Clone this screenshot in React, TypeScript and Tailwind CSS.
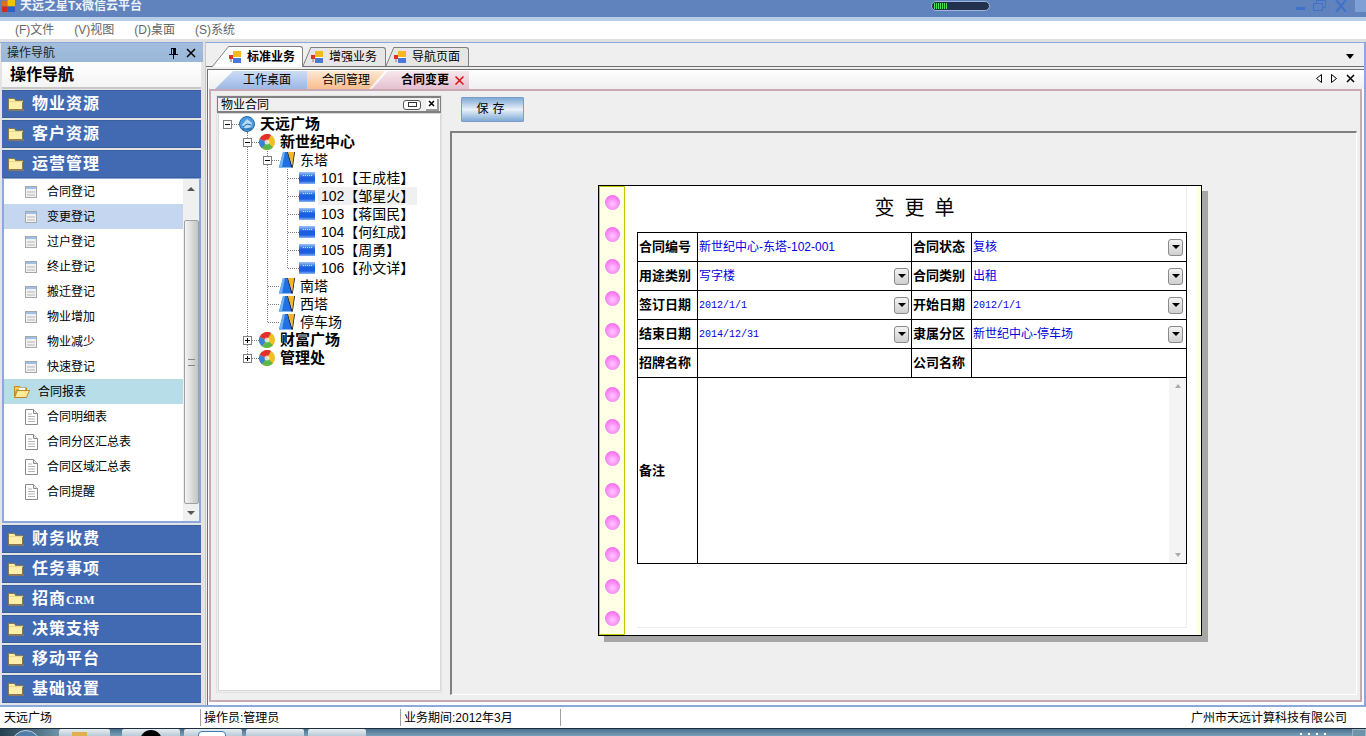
const CJK = "font-['Liberation_Sans','Noto_Sans_CJK_SC',sans-serif]";

function Logo() {
    return (
        <svg width="13" height="12" viewBox="0 0 14 13" className="shrink-0">
            <rect x="0" y="1" width="6" height="6" fill="#e0701e" />
            <rect x="6" y="0" width="8" height="7" fill="#f5c400" />
            <rect x="0" y="7" width="6" height="6" fill="#d42a1e" />
            <rect x="6" y="7" width="8" height="6" fill="#2f5fc8" />
        </svg>
    );
}

function TabIcon() {
    return (
        <svg width="12" height="13" viewBox="0 0 12 13" className="shrink-0">
            <rect x="0" y="4" width="4" height="4" fill="#e03020" />
            <rect x="1" y="8" width="2" height="3" fill="#b0b0b0" />
            <rect x="4" y="0" width="8" height="6" fill="#f5b820" />
            <rect x="4" y="6" width="8" height="6" fill="#4a78d8" />
            <rect x="4" y="6" width="8" height="1" fill="#fff" />
        </svg>
    );
}

function Folder() {
    return (
        <svg width="16" height="14" viewBox="0 0 16 14" className="shrink-0">
            <path d="M0.500 1.500h6l1 2h7v9.500h-14z" fill="#fdeea8" stroke="#8a7a4a" />
            <rect x="1" y="4" width="14" height="1" fill="#e8d890" />
            <rect x="1" y="12" width="15" height="2" fill="#8a7a5a" />
        </svg>
    );
}

function DocIcon() {
    return (
        <svg width="12" height="12" viewBox="0 0 12 12" className="shrink-0">
            <rect x="0.500" y="0.500" width="11" height="11" fill="#f2f2f2" stroke="#a8a8a8" />
            <rect x="1" y="1" width="10" height="2" fill="#9cc0ea" />
            <rect x="2" y="5" width="8" height="2" fill="#d4d4d4" />
            <rect x="2" y="8" width="8" height="2" fill="#d4d4d4" />
        </svg>
    );
}

function PageIcon() {
    return (
        <svg width="13" height="16" viewBox="0 0 13 16" className="shrink-0">
            <path d="M0.500 0.500h8l4 4v11h-12z" fill="#fff" stroke="#8a8a8a" />
            <path d="M8.500 0.500v4h4" fill="#e8e8e8" stroke="#8a8a8a" />
            <path d="M3 5h4M3 7.500h7M3 10h7M3 12.500h7" stroke="#b4b4b4" />
        </svg>
    );
}

function RoomIcon() {
    return (
        <svg width="16" height="12" viewBox="0 0 16 12" className="shrink-0">
            <defs>
                <linearGradient id="room" x1="0" y1="0" x2="0" y2="1">
                    <stop offset="0" stopColor="#9cc4f4" />
                    <stop offset="0.450" stopColor="#1c5ee0" />
                    <stop offset="0.750" stopColor="#1c5ee0" />
                    <stop offset="1" stopColor="#8ab8f0" />
                </linearGradient>
            </defs>
            <rect width="16" height="12" fill="url(#room)" />
            <path d="M4 3.500h9" stroke="#f0e090" strokeDasharray="1 1" />
        </svg>
    );
}

function TowerIcon() {
    return (
        <svg width="16" height="16" viewBox="0 0 16 16" className="shrink-0">
            <path d="M0 15.500L4 0H8L13 15.500z" fill="#1f70e4" />
            <path d="M0 15.500L4 0H6L3 15.500z" fill="#6fb0f4" />
            <path d="M9 0H15.500L13.200 13z" fill="#f5b820" />
            <path d="M8 0L12.500 15.500H13.500L8.900 0z" fill="#111" />
            <path d="M15.200 0L13 15.500H13.800L16 0z" fill="#111" />
        </svg>
    );
}

function PieIcon() {
    return (
        <svg width="16" height="16" viewBox="0 0 16 16" className="shrink-0">
            <circle cx="8" cy="8" r="8" fill="#eec020" />
            <path d="M8 8L0.600 5A8 8 0 0 1 12 1z" fill="#e03030" />
            <path d="M8 8L14 13.300A8 8 0 0 1 3 14.200z" fill="#58b848" />
            <path d="M8 8L3 14.200A8 8 0 0 1 0.600 5z" fill="#3a80d8" />
            <circle cx="8" cy="8" r="2.500" fill="#fff" fillOpacity="0.700" />
        </svg>
    );
}

function GlobeIcon() {
    return (
        <svg width="16" height="16" viewBox="0 0 16 16" className="shrink-0">
            <circle cx="8" cy="8" r="7.500" fill="#4a9ae0" stroke="#2a6aa8" />
            <path d="M3 9l5-6 5 4-1 4-6 2z" fill="#b4dcf6" />
            <path d="M4 11l4-3 4 1M3 13h10" stroke="#1f5c98" fill="none" />
        </svg>
    );
}

function Expander({ open }: { open: boolean }) {
    return (
        <span className="relative z-10 w-[9px] h-[9px] border border-[#808080] bg-white shrink-0 flex items-center justify-center">
            <span className="w-[5px] h-px bg-black absolute" />
            {!open && <span className="h-[5px] w-px bg-black absolute" />}
        </span>
    );
}

function ComboArrow() {
    return (
        <span className="w-[15px] h-[17px] rounded-[3px] border border-[#8a8a8a] bg-gradient-to-b from-[#f4f4f4] to-[#cfcfcf] flex items-center justify-center shrink-0">
            <span className="w-0 h-0 border-x-[4px] border-x-transparent border-t-[4px] border-t-black" />
        </span>
    );
}

function NavHead({ label }: { label: string }) {
    return (
        <div className="h-[28px] mx-[2px] bg-[#426ab3] border-y border-[#3a5f9f] flex items-center pl-[6px] gap-[8px] text-white font-bold text-[16px] tracking-[1px]">
            <Folder />
            {label.endsWith("CRM") ? (
                <span>招商<span className="font-['Liberation_Serif'] text-[12px] tracking-normal">CRM</span></span>
            ) : (
                <span>{label}</span>
            )}
        </div>
    );
}

const navTop = ["物业资源", "客户资源", "运营管理"];
const navBottom = ["财务收费", "任务事项", "招商CRM", "决策支持", "移动平台", "基础设置"];
const regItems = ["合同登记", "变更登记", "过户登记", "终止登记", "搬迁登记", "物业增加", "物业减少", "快速登记"];
const reportItems = ["合同明细表", "合同分区汇总表", "合同区域汇总表", "合同提醒"];
const rooms = ["101【王成桂】", "102【邹星火】", "103【蒋国民】", "104【何红成】", "105【周勇】", "106【孙文详】"];

function LeftPanel() {
    return (
        <div className="w-[203px] shrink-0 flex flex-col bg-[#e4e4e4]">
            <div className="h-[19px] ml-[1px] pt-[1px] bg-gradient-to-b from-[#a3bedd] to-[#9ab6d8] flex items-center justify-between pl-[6px] pr-[7px] text-[12px] text-[#222]">
                <span>操作导航</span>
                <span className="flex gap-[8px] items-center text-black font-bold text-[13px] leading-none">
                    <svg width="9" height="11" viewBox="0 0 9 11"><path d="M2 0h5v6h2v1H5v4H4V7H0V6h2zM3 1v5h1V1z" fill="#000" /></svg>
                    <svg width="10" height="10" viewBox="0 0 10 10" stroke="#000" strokeWidth="1.500"><path d="M1 1l8 8M9 1l-8 8" /></svg>
                </span>
            </div>
            <div className="h-[27px] mx-[2px] bg-gradient-to-b from-white to-[#f4f4f4] border-b-2 border-[#c8c8c8] flex items-center pl-[8px] text-[16px] font-bold text-black">
                操作导航
            </div>
            <div className="flex flex-col gap-[2px] pt-[1px]">
                {navTop.map((n) => <NavHead key={n} label={n} />)}
            </div>
            <div className="mx-[2px] h-[345px] bg-white border-2 border-t border-[#8aa8dc] flex overflow-hidden">
                <div className="flex-1 text-[12px] text-black flex flex-col">
                    {regItems.map((r) => (
                        <div key={r} className={`h-[25px] flex items-center pl-[21px] gap-[10px] ${r === "变更登记" ? "bg-[#c5d7f0]" : ""}`}>
                            <DocIcon />
                            <span>{r}</span>
                        </div>
                    ))}
                    <div className="h-[25px] flex items-center pl-[10px] gap-[8px] bg-[#b7dde8]">
                        <svg width="16" height="13" viewBox="0 0 16 13">
                            <path d="M0.500 1.500h5l1 1.500h6v2h-10l-2 7z" fill="#f8c860" stroke="#c08a20" />
                            <path d="M0.500 12.500l3-7h12l-3 7z" fill="#fdeb98" stroke="#c08a20" />
                            <path d="M5 3h6v2H5z" fill="#fff" />
                        </svg>
                        <span>合同报表</span>
                    </div>
                    {reportItems.map((r) => (
                        <div key={r} className="h-[25px] flex items-center pl-[21px] gap-[9px]">
                            <PageIcon />
                            <span>{r}</span>
                        </div>
                    ))}
                </div>
                <div className="w-[16px] bg-[#f0f0f0] flex flex-col items-center shrink-0">
                    <div className="h-[41px] pt-[8px] flex items-start">
                        <span className="w-0 h-0 border-x-[4px] border-x-transparent border-b-[4px] border-b-[#555]" />
                    </div>
                    <div className="w-[15px] h-[284px] border border-[#a0a0a0] rounded-[2px] bg-gradient-to-r from-[#f4f4f4] to-[#c4c4c4] flex items-center justify-center">
                        <span className="w-[7px] h-[7px] border-y border-[#888]" />
                    </div>
                    <div className="flex-1 flex items-center">
                        <span className="w-0 h-0 border-x-[4px] border-x-transparent border-t-[4px] border-t-[#555]" />
                    </div>
                </div>
            </div>
            <div className="flex flex-col gap-[2px] pt-[2px]">
                {navBottom.map((n) => <NavHead key={n} label={n} />)}
            </div>
        </div>
    );
}

function TreeRow({ indent, children }: { indent: number; children: React.ReactNode }) {
    return (
        <div className="h-[18px] flex items-center relative whitespace-nowrap" style={{ paddingLeft: indent }}>
            {children}
        </div>
    );
}

function Stub({ long }: { long?: boolean }) {
    return <span className={`${long ? "w-[11px]" : "w-[7px]"} border-t border-dotted border-[#808080] shrink-0`} />;
}

function Tree() {
    return (
        <div className="w-[226px] mb-[2px] shrink-0 flex flex-col border border-[#e2e2e2] bg-[#efefef]">
            <div className="h-[17px] shrink-0 bg-[#efefef] border border-t-2 border-b-2 border-[#808080] flex items-center justify-between pl-[3px] pr-[1px] text-[12px] text-black">
                <span>物业合同</span>
                <span className="flex items-center gap-[5px]">
                    <span className="w-[18px] h-[10px] border border-[#555] rounded-[3px] bg-white flex items-center justify-center">
                        <span className="w-[9px] h-[5px] border border-[#333]" />
                    </span>
                    <span className="w-[13px] h-[12px] bg-white border-r-2 border-b-2 border-[#999] flex items-center justify-center">
                        <svg width="7" height="7" viewBox="0 0 7 7" stroke="#000" strokeWidth="1.500"><path d="M1 1l5 5M6 1l-5 5" /></svg>
                    </span>
                </span>
            </div>
            <div className="flex-1 ml-[1px] mb-[1px] bg-white border border-[#d8d8d8] pt-[1px] text-[14px] text-black relative overflow-hidden">
                <span className="absolute left-[28px] top-[18px] h-[226px] border-l border-dotted border-[#808080]" />
                <span className="absolute left-[48px] top-[37px] h-[171px] border-l border-dotted border-[#808080]" />
                <span className="absolute left-[68px] top-[55px] h-[99px] border-l border-dotted border-[#808080]" />
                <TreeRow indent={4}>
                    <Expander open /><Stub /><GlobeIcon />
                    <span className="ml-[5px] text-[15px] font-bold">天远广场</span>
                </TreeRow>
                <TreeRow indent={24}>
                    <Expander open /><Stub /><PieIcon />
                    <span className="ml-[5px] text-[15px] font-bold">新世纪中心</span>
                </TreeRow>
                <TreeRow indent={44}>
                    <Expander open /><Stub /><TowerIcon />
                    <span className="ml-[5px]">东塔</span>
                </TreeRow>
                {rooms.map((r) => (
                    <TreeRow key={r} indent={69}>
                        <Stub long />
                        <RoomIcon />
                        <span className={`ml-[3px] pl-[3px] pr-[3px] h-[18px] flex items-center ${r.startsWith("102") ? "bg-[#f0f0f0]" : ""}`}>{r}</span>
                    </TreeRow>
                ))}
                {["南塔", "西塔", "停车场"].map((t) => (
                    <TreeRow key={t} indent={49}>
                        <Stub long />
                        <TowerIcon />
                        <span className="ml-[5px]">{t}</span>
                    </TreeRow>
                ))}
                {["财富广场", "管理处"].map((t) => (
                    <TreeRow key={t} indent={24}>
                        <Expander open={false} /><Stub /><PieIcon />
                        <span className="ml-[5px] text-[15px] font-bold">{t}</span>
                    </TreeRow>
                ))}
            </div>
        </div>
    );
}

function Field({ label, value, date, combo, last }: { label: string; value?: string; date?: boolean; combo?: boolean; last?: boolean }) {
    return (
        <>
            <td className="border border-black px-[1px] font-bold text-[13px] text-black whitespace-nowrap">{label}</td>
            <td className={`border border-black pl-[1px] text-[#0000e0] ${last ? "pr-[3px]" : "pr-[2px]"}`}>
                <div className="flex items-center justify-between">
                    <span className={date ? "font-['Liberation_Mono'] text-[10px]" : "text-[12px]"}>{value}</span>
                    {combo && <ComboArrow />}
                </div>
            </td>
        </>
    );
}

function FormPaper() {
    const dots = Array.from({ length: 14 }, (_, i) => i);
    return (
        <div className="w-[604px] h-[451px] bg-white border border-black shadow-[6px_6px_0_0_#a6a6a6] flex">
            <div className="w-[26px] bg-[#ffffe6] border border-[#c8c800] flex flex-col items-center gap-[17px] pt-[8px] shrink-0">
                {dots.map((d) => (
                    <span key={d} className="w-[15px] h-[15px] rounded-full shrink-0 bg-[radial-gradient(circle_at_50%_60%,#ffc8ff,#f050e8)]" />
                ))}
            </div>
            <div className="flex-1 flex border-r-4 border-[#ffffdc]">
                <div className="w-[12px] shrink-0" />
                <div className="w-[550px] h-[442px] border-r border-b border-[#eeeeee] flex flex-col">
                    <div className="h-[46px] shrink-0 pb-[2px] flex items-center justify-center text-[20px] text-black tracking-[10px] pl-[16px]">变更单</div>
                    <table className="w-[549px] border-collapse table-fixed">
                        <colgroup>
                            <col className="w-[60px]" />
                            <col className="w-[214px]" />
                            <col className="w-[60px]" />
                            <col className="w-[215px]" />
                        </colgroup>
                        <tbody>
                            <tr className="h-[29px]">
                                <Field label="合同编号" value="新世纪中心-东塔-102-001" />
                                <Field label="合同状态" value="复核" combo last />
                            </tr>
                            <tr className="h-[29px]">
                                <Field label="用途类别" value="写字楼" combo />
                                <Field label="合同类别" value="出租" combo last />
                            </tr>
                            <tr className="h-[29px]">
                                <Field label="签订日期" value="2012/1/1" date combo />
                                <Field label="开始日期" value="2012/1/1" date combo last />
                            </tr>
                            <tr className="h-[29px]">
                                <Field label="结束日期" value="2014/12/31" date combo />
                                <Field label="隶属分区" value="新世纪中心-停车场" combo last />
                            </tr>
                            <tr className="h-[29px]">
                                <Field label="招牌名称" />
                                <Field label="公司名称" last />
                            </tr>
                            <tr className="h-[186px]">
                                <td className="border border-black px-[1px] font-bold text-[13px] text-black">备注</td>
                                <td colSpan={3} className="border border-black p-0 align-top">
                                    <div className="h-[185px] flex justify-end">
                                        <div className="w-[17px] bg-[#f4f4f4] flex flex-col items-center justify-between py-[6px]">
                                            <span className="w-0 h-0 border-x-[3px] border-x-transparent border-b-[4px] border-b-[#aaa]" />
                                            <span className="w-0 h-0 border-x-[3px] border-x-transparent border-t-[4px] border-t-[#aaa]" />
                                        </div>
                                    </div>
                                </td>
                            </tr>
                        </tbody>
                    </table>
                </div>
            </div>
        </div>
    );
}

function OuterTab({ label, active }: { label: string; active?: boolean }) {
    const w = active ? 17 : 8;
    const h = active ? 21 : 19;
    return (
        <div className={`flex items-stretch ${active ? "-mb-[1px] relative z-10" : ""}`} style={{ height: h }}>
            <svg width={w} height={h} className="shrink-0 block">
                <path d={`M0 ${h}L${w} 0V${h}z`} fill={active ? "#fff" : "#e6e6e6"} />
                <path d={`M0 ${h}L${w} 0`} stroke="#808080" fill="none" />
            </svg>
            <div className={`flex items-center gap-[6px] border-t border-r border-[#808080] rounded-tr-[3px] text-[12px] text-black ${active ? "pr-[7px] bg-white font-bold" : "pr-[8px] bg-[#e6e6e6]"}`}>
                <TabIcon />
                <span>{label}</span>
            </div>
        </div>
    );
}

function InnerTab({ label, cls, close }: { label: string; cls: string; close?: boolean }) {
    return (
        <div className={`h-[18px] flex items-center text-[12px] text-black ${cls}`}>
            <span>{label}</span>
            {close && (
                <svg width="9" height="9" viewBox="0 0 9 9" stroke="#e01010" strokeWidth="1.500" className="ml-[6px]"><path d="M0.500 0.500l8 8M8.500 0.500l-8 8" /></svg>
            )}
        </div>
    );
}

function MainArea() {
    return (
        <div className="flex-1 min-w-0 ml-[2px] flex flex-col border-l border-l-[#c8c8c8] border-t border-t-[#8aa8dc] border-r-2 border-r-[#8aa8dc] bg-[#efefef]">
            <div className="h-[24px] shrink-0 flex items-end justify-between pl-[6px] pr-[10px] border-b border-[#707070]">
                <div className="flex items-end">
                    <OuterTab label="标准业务" active />
                    <OuterTab label="增强业务" />
                    <OuterTab label="导航页面" />
                </div>
                <span className="mb-[7px] w-0 h-0 border-x-[4px] border-x-transparent border-t-[5px] border-t-black" />
            </div>
            <div className="flex-1 min-h-0 flex flex-col mt-[2px] ml-[1px] border-t border-l border-[#707070] pl-[1px] bg-white">
                <div className="h-[19px] shrink-0 flex items-end justify-between bg-gradient-to-b from-[#ffffff] to-[#efefef] pl-[6px] pr-[8px]">
                    <div className="flex items-end">
                        <InnerTab label="工作桌面" cls="w-[92px] pl-[28px] bg-gradient-to-b from-[#cddcf4] to-[#9db8e4] [clip-path:polygon(18px_0,100%_0,100%_100%,0_100%)]" />
                        <InnerTab label="合同管理" cls="w-[78px] pl-[15px] bg-gradient-to-b from-[#fde8d0] to-[#f8bd8e] [clip-path:polygon(0_0,100%_0,calc(100%_-_16px)_100%,0_100%)]" />
                        <InnerTab label="合同变更" close cls="w-[97px] pl-[29px] -ml-[13px] font-bold bg-gradient-to-b from-[#f8e8ee] to-[#e4c0ce] [clip-path:polygon(16px_0,100%_0,100%_100%,0_100%)]" />
                    </div>
                    <div className="flex items-center gap-[9px] mb-[6px] mr-[1px]">
                        <svg width="6" height="9" viewBox="0 0 6 9" fill="#fff" stroke="#000"><path d="M5.500 0.500v8l-5-4z" /></svg>
                        <svg width="6" height="9" viewBox="0 0 6 9" fill="#fff" stroke="#000"><path d="M0.500 0.500v8l5-4z" /></svg>
                        <svg width="9" height="9" viewBox="0 0 9 9" stroke="#000" strokeWidth="1.500"><path d="M1 1l7 7M8 1l-7 7" /></svg>
                    </div>
                </div>
                <div className="flex-1 min-h-0 flex mb-[3px] mr-[2px] border-2 border-[#c8a8b4] bg-[#efefef] pl-[5px] pt-[4px] pb-[5px] pr-[3px]">
                    <Tree />
                    <div className="flex-1 min-w-0 flex flex-col pl-[8px] pt-[1px]">
                        <div className="h-[35px] pl-[11px] shrink-0">
                            <button className="w-[63px] h-[25px] border border-[#7a9ec8] rounded-[1px] bg-gradient-to-b from-[#7fa9d6] via-[#e8f1f8] to-[#7fa9d6] text-[12px] text-black tracking-[4px]">保存</button>
                        </div>
                        <div className="flex-1 min-h-0 border-t-2 border-l-2 border-[#808080] border-r border-b border-r-white border-b-white pl-[146px] pt-[52px]">
                            <FormPaper />
                        </div>
                    </div>
                </div>
            </div>
        </div>
    );
}

function StatusBar() {
    return (
        <div className="h-[21px] shrink-0 bg-white flex items-center text-[12px] text-black">
            <div className="w-[201px] pl-[4px] h-[17px] flex items-center border-r border-[#a0a0a0]">天远广场</div>
            <div className="w-[200px] pl-[3px] h-[17px] flex items-center border-r border-[#a0a0a0]">操作员:管理员</div>
            <div className="w-[160px] pl-[3px] h-[17px] flex items-center border-r border-[#a0a0a0]">业务期间:2012年3月</div>
            <div className="flex-1 text-right pr-[19px]">广州市天远计算科技有限公司</div>
        </div>
    );
}

function TaskButton({ w, ml, children }: { w: number; ml: number; children?: React.ReactNode }) {
    return (
        <span className="relative h-full shrink-0 rounded-t-[2px] bg-gradient-to-b from-[#e8eef2] to-[#b8cad6] overflow-hidden" style={{ width: w, marginLeft: ml }}>
            {children}
        </span>
    );
}

function Taskbar() {
    return (
        <div className="h-[8px] shrink-0 bg-gradient-to-b from-[#4a7090] to-[#7aa0b8] border-t border-[#1c2c3c] flex overflow-hidden relative">
            <div className="w-[59px] shrink-0 relative bg-gradient-to-r from-[#24404f] to-[#6f93a8]">
                <span className="absolute left-[11px] top-[1px] w-[30px] h-[30px] rounded-full bg-[#4f7fa8] border border-[#b8d0e0]" />
            </div>
            <TaskButton w={51} ml={0}>
                <span className="absolute left-[13px] top-[3px] w-[15px] h-[6px] bg-[#e0b050]" />
            </TaskButton>
            <TaskButton w={58} ml={12}>
                <span className="absolute left-[18px] top-[1px] w-[22px] h-[22px] rounded-full bg-black" />
            </TaskButton>
            <TaskButton w={58} ml={4}>
                <span className="absolute left-[14px] top-[2px] w-[28px] h-[12px] rounded-[4px] bg-white border border-[#3a78c0]" />
            </TaskButton>
            <TaskButton w={58} ml={4} />
            <TaskButton w={58} ml={4} />
            <span className="absolute left-[1300px] top-[4px] flex gap-[6px]">
                {[0, 1, 2, 3].map((i) => <span key={i} className="w-[2px] h-[2px] bg-white" />)}
            </span>
            <span className="absolute right-0 top-0 w-[14px] h-[8px] border border-[#9ab4c4] bg-[#6f93a8]" />
        </div>
    );
}

export default function App() {
    return (
        <div className={`w-[1366px] h-[736px] overflow-hidden flex flex-col bg-[#e8e8e8] ${CJK}`}>
            <div className="h-[17px] shrink-0 bg-[#6083bd] flex justify-between relative overflow-hidden">
                <div className="h-[12px] flex items-center gap-[5px] pl-[2px] text-[#eef2fa] text-[12px] leading-[12px] font-bold">
                    <Logo />
                    <span>天远之星Tx微信云平台</span>
                </div>
                <div className="absolute left-[931px] top-[1px] w-[59px] h-[10px] rounded-full bg-[#22324e] border border-[#9fb4d8] flex items-center pl-[2px] gap-[1px]">
                    {[0, 1, 2, 3, 4, 5, 6].map((i) => <span key={i} className="w-px h-[6px] bg-[#4ee04e]" />)}
                </div>
                <div className="flex items-start">
                    <span className="w-[9px] h-[3px] bg-[#3f72c8] mt-[7px]" />
                    <svg width="13" height="12" viewBox="0 0 13 12" fill="none" stroke="#3f72c8" className="ml-[8px]"><rect x="3.500" y="0.500" width="9" height="7" /><rect x="0.500" y="3.500" width="9" height="7" fill="#6083bd" /></svg>
                    <svg width="12" height="12" viewBox="0 0 12 12" stroke="#3f72c8" strokeWidth="2" className="ml-[9px]"><path d="M1 0l10 12M11 0L1 12" /></svg>
                    <span className="w-[11px] h-[12px] bg-[#7fa0d4] ml-[8px]" />
                </div>
            </div>
            <div className="h-[4px] shrink-0 bg-[#b8cde8]" />
            <div className="h-[18px] shrink-0 bg-white flex items-center pl-[15px] gap-[20px] text-[12px] text-[#666]">
                <span>(F)文件</span>
                <span>(V)视图</span>
                <span>(D)桌面</span>
                <span>(S)系统</span>
            </div>
            <div className="h-[3px] shrink-0 bg-[#e0e0e0]" />
            <div className="flex-1 min-h-0 flex bg-[#e4e4e4] border-b-2 border-[#8aa8dc]">
                <div className="flex flex-col">
                    <div className="h-px shrink-0 bg-[#8aa8dc]" />
                    <LeftPanel />
                </div>
                <MainArea />
            </div>
            <StatusBar />
            <Taskbar />
        </div>
    );
}
